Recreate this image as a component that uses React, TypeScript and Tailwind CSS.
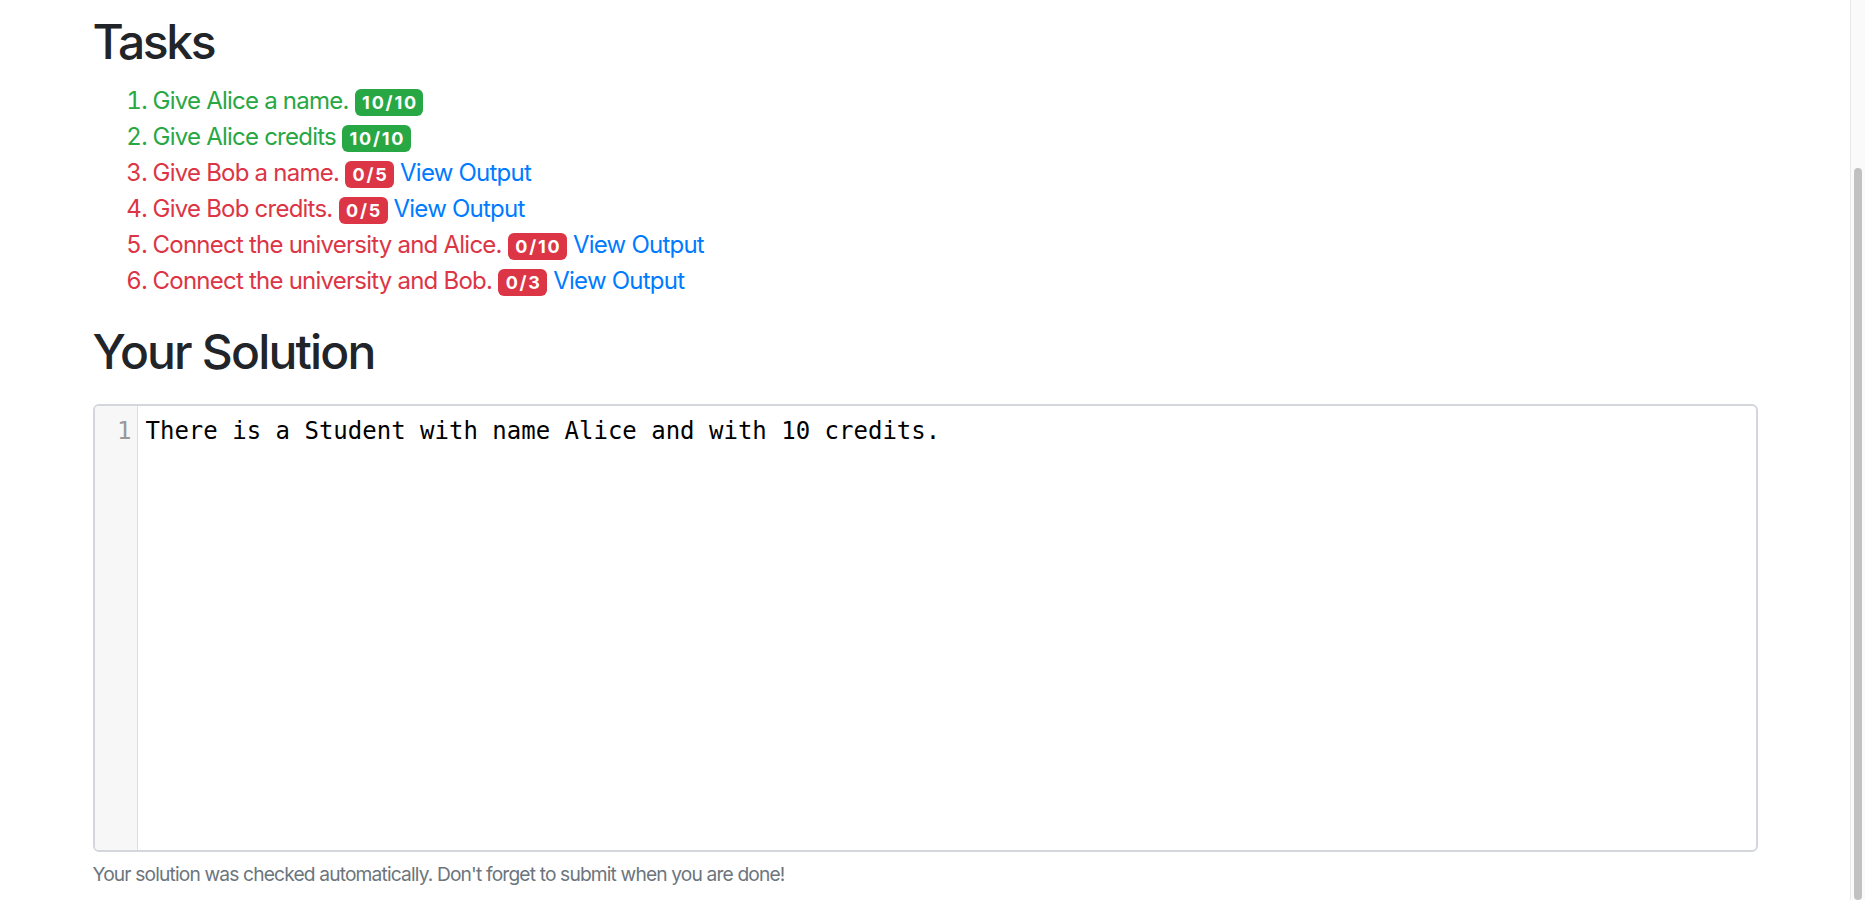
import React from "react";

type Task = { text: string; score: string; ok: boolean };

const tasks: Task[] = [
  { text: "Give Alice a name.", score: "10/10", ok: true },
  { text: "Give Alice credits", score: "10/10", ok: true },
  { text: "Give Bob a name.", score: "0/5", ok: false },
  { text: "Give Bob credits.", score: "0/5", ok: false },
  { text: "Connect the university and Alice.", score: "0/10", ok: false },
  { text: "Connect the university and Bob.", score: "0/3", ok: false },
];

export default function App() {
  return (
    <div
      className="flex h-[900px] w-full overflow-hidden bg-white"
      style={{ fontFamily: "Inter, 'Noto Sans', sans-serif" }}
    >
      <main className="flex-1 min-w-0">
        <div className="mx-auto max-w-[1710px] px-[22.5px] pt-[13px]">
          <h2 className="text-[48px] leading-[1.2] font-medium tracking-[-0.05em] text-[#212529] mb-[12px]">Tasks</h2>
          <ol className="list-decimal pl-[60px] mb-[24px] text-[24px] leading-[36px] tracking-[-0.032em]">
            {tasks.map((t, i) => (
              <li key={i} className={t.ok ? "text-[#28a745]" : "text-[#dc3545]"}>
                {t.text}{" "}
                <span
                  className={
                    "inline-block rounded-[6px] pl-[7.5px] pr-[5.5px] py-[4.5px] text-[18px] font-bold leading-none tracking-[0.1em] text-white align-baseline " +
                    (t.ok ? "bg-[#28a745]" : "bg-[#dc3545]")
                  }
                >
                  {t.score}
                </span>
                {!t.ok && (
                  <>
                    {" "}
                    <a className="text-[#007bff]" href="#">
                      View Output
                    </a>
                  </>
                )}
              </li>
            ))}
          </ol>
          <h2 className="text-[48px] leading-[1.2] font-medium tracking-[-0.038em] text-[#212529] mb-[24px]">Your Solution</h2>
          <div className="flex h-[448px] rounded-[6px] border-2 border-[#d3d7dc] overflow-hidden">
            <div className="w-[43px] shrink-0 bg-[#f7f7f7] border-r border-[#dddddd] pt-[11px] pr-[5px] text-right text-[24px] leading-[28.8px] text-[#999999]" style={{ fontFamily: "'DejaVu Sans Mono', monospace" }}>
              1
            </div>
            <div className="flex-1 pl-[8px] pt-[11px] text-[24px] leading-[28.8px] text-black" style={{ fontFamily: "'DejaVu Sans Mono', monospace" }}>
              There is a Student with name Alice and with 10 credits.
            </div>
          </div>
          <p className="mt-[8px] text-[19.2px] leading-[28.8px] tracking-[-0.044em] text-[#6c757d]">
            Your solution was checked automatically. Don't forget to submit when you are done!
          </p>
        </div>
      </main>
      <div className="w-[15px] shrink-0 flex flex-col bg-[#fafafa] border-l border-[#e8e8e8] pt-[168px] px-[3px]">
        <div className="flex-1 rounded-full bg-[#c1c1c1]" />
      </div>
    </div>
  );
}
